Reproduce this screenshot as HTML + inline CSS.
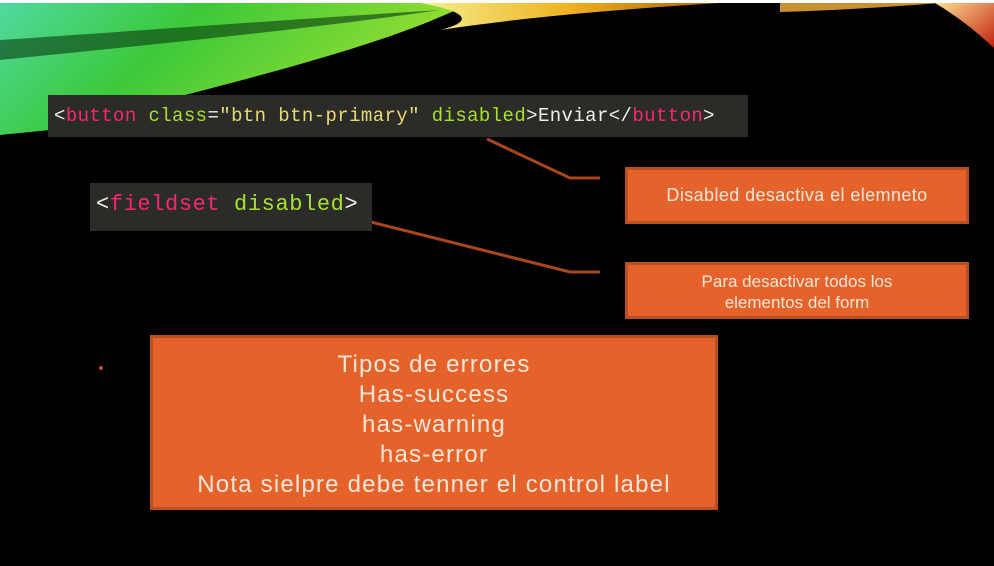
<!DOCTYPE html>
<html><head><meta charset="utf-8"><style>
body{margin:0;width:994px;height:566px;background:#000;position:relative;overflow:hidden;font-family:"Liberation Sans",sans-serif}
.code{position:absolute;background:#2b2b28;font-family:"Liberation Mono",monospace;color:#f0f0ea;white-space:pre}
.t{color:#f92672}.a{color:#a6e22e}.s{color:#e6db74}
.ob{position:absolute;background:#e5632a;border:3px solid #b9501f;color:#fbe6d8;text-align:center;box-sizing:border-box;box-shadow:0 0 3px #000;white-space:nowrap}
</style></head><body>
<svg width="994" height="566" style="position:absolute;left:0;top:0">
<defs>
<linearGradient id="g" x1="0" y1="0" x2="1" y2="0.3"><stop offset="0" stop-color="#4fd9a0"/><stop offset="0.4" stop-color="#3cc93a"/><stop offset="1" stop-color="#9fe030"/></linearGradient>
<linearGradient id="y" x1="0" y1="0" x2="1" y2="0"><stop offset="0" stop-color="#f4f090"/><stop offset="0.5" stop-color="#f0b020"/><stop offset="1" stop-color="#a86010"/></linearGradient>
<linearGradient id="r" x1="0" y1="0" x2="1" y2="1"><stop offset="0" stop-color="#ffe090"/><stop offset="1" stop-color="#c02010"/></linearGradient>
</defs>
<rect x="0" y="0" width="994" height="3" fill="#fff"/>
<path d="M0 3 L470 3 C380 50 200 90 50 130 L0 135 Z" fill="url(#g)"/>
<path d="M0 40 C150 30 280 20 440 10 C300 30 150 45 0 60 Z" fill="#0a3a10" opacity="0.6"/>
<path d="M420 3 L720 3 C640 8 540 15 440 30 C480 20 460 10 420 3Z" fill="url(#y)"/>
<path d="M780 3 L940 3 C900 6 850 10 780 12 Z" fill="#c89030"/>
<path d="M935 3 L994 3 L994 48 C975 30 955 15 935 3Z" fill="url(#r)"/>
<polyline points="487,139 570,178 600,178" fill="none" stroke="#a9461b" stroke-width="3"/>
<polyline points="355,218 570,272 600,272" fill="none" stroke="#a9461b" stroke-width="3"/>
<circle cx="101" cy="368" r="2" fill="#c0502a"/>
</svg>
<div class="code" style="left:48px;top:95px;width:700px;height:42px;font-size:19px;letter-spacing:0.4px;line-height:42px;padding-left:6px;box-sizing:border-box">&lt;<span class="t">button</span> <span class="a">class</span>=<span class="s">"btn btn-primary"</span> <span class="a">disabled</span>&gt;Enviar&lt;/<span class="t">button</span>&gt;</div>
<div class="code" style="left:90px;top:183px;width:282px;height:48px;font-size:22px;letter-spacing:0.6px;line-height:44px;padding-left:6px;box-sizing:border-box">&lt;<span class="t">fieldset</span> <span class="a">disabled</span>&gt;</div>
<div class="ob" style="left:625px;top:167px;width:344px;height:57px;font-size:18px;letter-spacing:0.4px;line-height:51px">Disabled desactiva el elemneto</div>
<div class="ob" style="left:625px;top:262px;width:344px;height:57px;font-size:17px;line-height:21px;padding-top:6px">Para desactivar todos los<br>elementos del form</div>
<div class="ob" style="left:150px;top:335px;width:568px;height:175px;font-size:24px;letter-spacing:1.2px;line-height:30px;padding-top:12px">Tipos de errores<br>Has-success<br>has-warning<br>has-error<br>Nota sielpre debe tenner el control label</div>
</body></html>
